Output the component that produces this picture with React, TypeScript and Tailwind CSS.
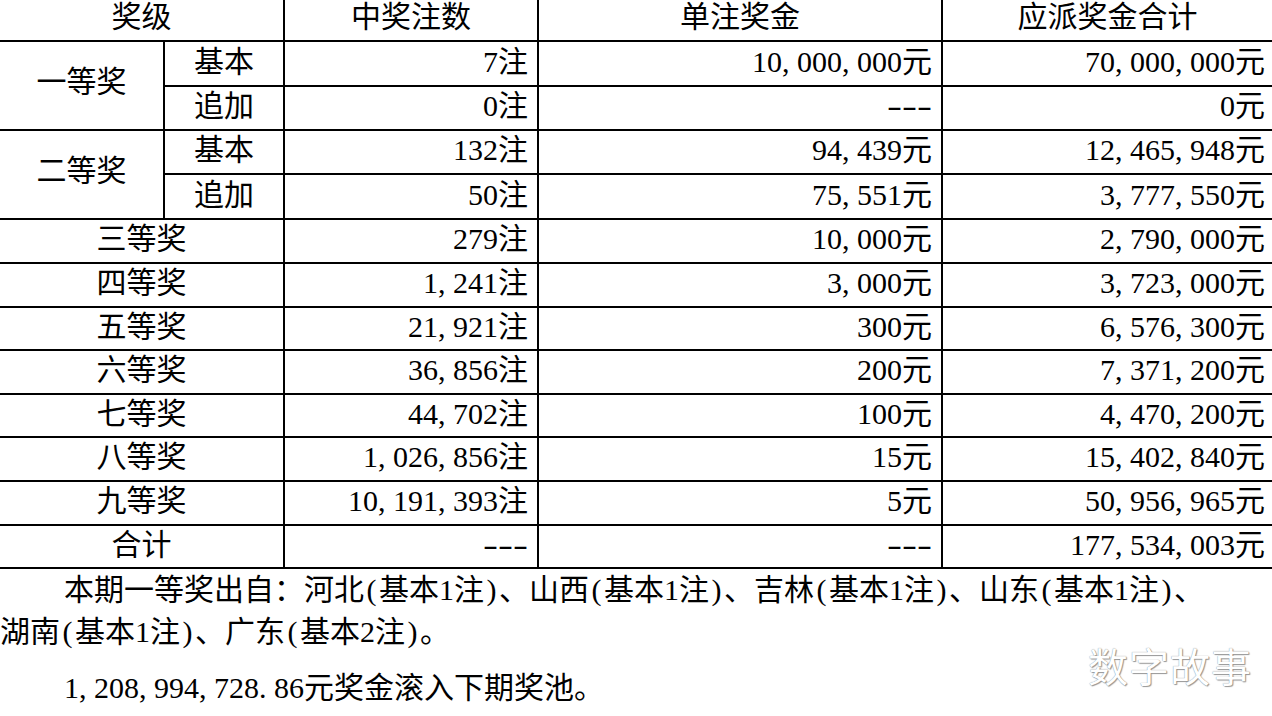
import React from 'react'

type Row = { grade: string; sub?: string; count: string; unit: string; total: string }

const rows: Row[] = [
  { grade: '一等奖', sub: '基本', count: '7注', unit: '10,000,000元', total: '70,000,000元' },
  { grade: '一等奖', sub: '追加', count: '0注', unit: '---', total: '0元' },
  { grade: '二等奖', sub: '基本', count: '132注', unit: '94,439元', total: '12,465,948元' },
  { grade: '二等奖', sub: '追加', count: '50注', unit: '75,551元', total: '3,777,550元' },
  { grade: '三等奖', count: '279注', unit: '10,000元', total: '2,790,000元' },
  { grade: '四等奖', count: '1,241注', unit: '3,000元', total: '3,723,000元' },
  { grade: '五等奖', count: '21,921注', unit: '300元', total: '6,576,300元' },
  { grade: '六等奖', count: '36,856注', unit: '200元', total: '7,371,200元' },
  { grade: '七等奖', count: '44,702注', unit: '100元', total: '4,470,200元' },
  { grade: '八等奖', count: '1,026,856注', unit: '15元', total: '15,402,840元' },
  { grade: '九等奖', count: '10,191,393注', unit: '5元', total: '50,956,965元' },
  { grade: '合计', count: '---', unit: '---', total: '177,534,003元' },
]

function Num({ text }: { text: string }) {
  if (text === '---') {
    return <span className="inline-block indent-0 origin-right scale-x-150">---</span>
  }
  return (
    <>
      {text.split('').map((c, i) =>
        c === ',' || c === '.' ? (
          <span key={i} className="inline-block indent-0 w-[0.5em]">{c}</span>
        ) : c === '(' || c === ')' ? (
          <span key={i} className="inline-block indent-0 w-[0.5em] text-center">{c}</span>
        ) : (
          c
        )
      )}
    </>
  )
}

const cell = 'bg-white flex items-center pb-[4px]'
const right = `${cell} justify-end pr-[9px]`
const center = `${cell} justify-center`

export default function App() {
  return (
    <div className="relative w-[1272px] h-[716px] overflow-hidden bg-white text-black font-['Liberation_Serif','Noto_Sans_CJK_SC',serif] text-[30px] leading-none">
      {/* table */}
      <div className="grid grid-cols-[163px_118px_252px_402px_1fr] grid-rows-[40px_43px_42px_42px_43px_42px_42px_41px_42px_41px_42px_42px_41px] gap-[2px] bg-black border-b-2 border-black">
        <div className={`${center} col-span-2 !pb-[6px]`}>奖级</div>
        <div className={`${center} !pb-[6px]`}>中奖注数</div>
        <div className={`${center} !pb-[6px]`}>单注奖金</div>
        <div className={`${center} !pb-[6px]`}>应派奖金合计</div>

        {rows.map((r, i) => (
          <React.Fragment key={i}>
            {r.sub ? (
              i % 2 === 0 && <div className={`${center} row-span-2 !pb-[8px]`}>{r.grade}</div>
            ) : (
              <div className={`${center} col-span-2`}>{r.grade}</div>
            )}
            {r.sub && <div className={center}>{r.sub}</div>}
            <div className={right}><Num text={r.count} /></div>
            <div className={right}><Num text={r.unit} /></div>
            <div className={`${right} !pr-[7px]`}><Num text={r.total} /></div>
          </React.Fragment>
        ))}
      </div>

      {/* notes */}
      <p className="pl-[4px] leading-[42px] indent-[2em] whitespace-nowrap">
        本期一等奖出自：河北<Num text="(" />基本1注<Num text=")" />、山西<Num text="(" />基本1注<Num text=")" />、吉林<Num text="(" />基本1注<Num text=")" />、山东<Num text="(" />基本1注<Num text=")" />、
      </p>
      <p className="leading-[42px] whitespace-nowrap">
        湖南<Num text="(" />基本1注<Num text=")" />、广东<Num text="(" />基本2注<Num text=")" />。
      </p>
      <p className="pl-[4px] mt-[14px] leading-[42px] indent-[2em] whitespace-nowrap">
        <Num text="1,208,994,728.86" />元奖金滚入下期奖池。
      </p>

      {/* watermark */}
      <div className="absolute left-[1088px] top-[645px] text-[40px] leading-none tracking-[1px] font-['Noto_Sans_CJK_SC',sans-serif] text-white [text-shadow:0_0_1px_#777,1px_1px_1px_#999]">
        数字故事
      </div>
    </div>
  )
}
